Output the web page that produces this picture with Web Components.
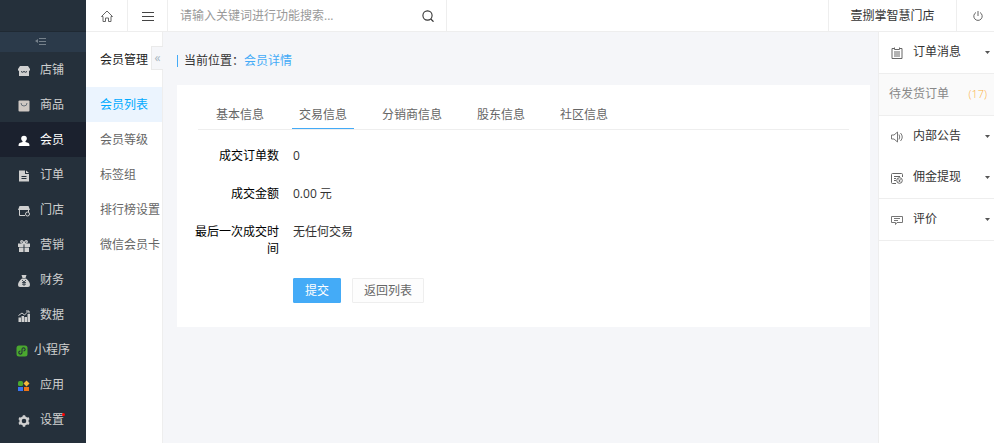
<!DOCTYPE html>
<html lang="zh-CN">
<head>
<meta charset="utf-8">
<title>会员详情</title>
<style>
  body {
    margin: 0;
    background: #f5f6f9;
    color: #333;
    font: 12px/17px "Open Sans", "Noto Sans CJK SC", sans-serif;
  }
</style>
</head>
<body>
<shop-layout>
  <side-nav slot="nav">
    <side-item icon="shop">店铺</side-item>
    <side-item icon="goods">商品</side-item>
    <side-item icon="member" active>会员</side-item>
    <side-item icon="order">订单</side-item>
    <side-item icon="store">门店</side-item>
    <side-item icon="gift">营销</side-item>
    <side-item icon="money">财务</side-item>
    <side-item icon="data">数据</side-item>
    <side-item icon="mini" wide>小程序</side-item>
    <side-item icon="apps">应用</side-item>
    <side-item icon="gear" dot>设置</side-item>
  </side-nav>
  <top-bar slot="top">壹捌掌智慧门店</top-bar>
  <sub-nav slot="sub" heading="会员管理">
    <sub-item active>会员列表</sub-item>
    <sub-item>会员等级</sub-item>
    <sub-item>标签组</sub-item>
    <sub-item>排行榜设置</sub-item>
    <sub-item>微信会员卡</sub-item>
  </sub-nav>
  <page-crumb label="当前位置：">会员详情</page-crumb>
  <info-card>
    <tab-list slot="tabs">
      <tab-item>基本信息</tab-item>
      <tab-item active>交易信息</tab-item>
      <tab-item>分销商信息</tab-item>
      <tab-item>股东信息</tab-item>
      <tab-item>社区信息</tab-item>
    </tab-list>
    <form-row label="成交订单数">0</form-row>
    <form-row label="成交金额">0.00 元</form-row>
    <form-row label="最后一次成交时间">无任何交易</form-row>
    <form-row><push-button primary>提交</push-button><push-button>返回列表</push-button></form-row>
  </info-card>
  <notice-panel slot="notices">
    <notice-group icon="clipboard" heading="订单消息" line>
      <notice-item count="(17)">待发货订单</notice-item>
    </notice-group>
    <notice-group icon="speaker" heading="内部公告"></notice-group>
    <notice-group icon="cash" heading="佣金提现" line></notice-group>
    <notice-group icon="comment" heading="评价" line></notice-group>
  </notice-panel>
</shop-layout>

<script>
const icons = {
  shop: '<path fill="#d0d0d0" d="M2 1h8l2 3v1q-1 2-2.500 1q-1.500 1.500-3.500 0q-2 1.500-3.500 0Q1 7 0 5V4z"/><path fill="#d0d0d0" d="M1 6h10v5H1z"/><path fill="none" stroke="#25303b" d="M3 6.500q1.500 1.500 3 0q1.500 1.500 3 0"/>',
  goods: '<rect x=".5" y=".5" width="11" height="11" rx="1" fill="#cfc8c3"/><path fill="none" stroke="#68717a" d="M3 3q0 3 3 3t3-3"/>',
  member: '<circle cx="6" cy="3.500" r="2.800" fill="#fff"/><path fill="#fff" d="M4.500 5h3v2l3 1q1 .5 1 3H.5q0-2.500 1-3l3-1z"/>',
  order: '<path fill="#d0d0d0" d="M1 .5h6V4h4v7.500H1z"/><path fill="#d0d0d0" d="M8 .5L11 3H8z"/><path stroke="#25303b" d="M3.500 6.500h5M3.500 8.500h5"/>',
  store: '<path fill="#d0d0d0" d="M1.500 1h9L12 5H0z"/><path fill="none" stroke="#d0d0d0" d="M1.500 5v5.500H7M10.500 5v2"/><circle cx="9.500" cy="9" r="2" fill="#25303b" stroke="#d0d0d0"/>',
  gift: '<path fill="#d0d0d0" d="M0 3.500h5.500V7H0zM6.500 3.500H12V7H6.500zM1 7.500h4.500V12H1zM6.500 7.500H11V12H6.500z"/><path fill="none" stroke="#d0d0d0" stroke-width="1.300" d="M6 3.500Q2 3 3 1q2-1 3 2.500Q7 0 9 1q1 2-3 2.500"/>',
  money: '<path fill="#d0d0d0" d="M3.500 0h5L7.500 3h-3zM4 3.500h4q4 3 4 6.500 0 2-2 2H2q-2 0-2-2 0-3.500 4-6.500z"/><path fill="none" stroke="#25303b" stroke-width=".8" d="M4 5l2 2 2-2M6 7v4M4 7.500h4M4 9.200h4"/>',
  data: '<path fill="#d0d0d0" d="M.5 7.500H3V12H.5zM3.500 6H6v6H3.500zM6.500 7H9v5H6.500zM9.500 4H12v8H9.500z"/><path fill="none" stroke="#d0d0d0" d="M.5 5.500L4 3l2.500 2L10 1.500M8 1h3v2.500"/>',
  mini: '<rect x=".5" y=".5" width="11" height="11" rx="2.500" fill="#4aa82f"/><path fill="none" stroke="#25303b" stroke-width="1.100" d="M4.500 6Q2.500 6.200 2.800 8q.6 1.500 2.200 1Q6 8.500 6 7.500v-3Q6 3 7.300 2.800q1.700 0 1.900 1.700Q9 6 7.500 6"/>',
  apps: '<rect x="0" y="1" width="5" height="5" rx="1.500" fill="#4aa82f"/><path fill="#f5b93b" d="M8.500.500L11.500 3.500 8.500 6.500 5.500 3.500z"/><rect y="7" width="5" height="4" fill="#3974f0"/><rect x="6" y="7" width="5" height="4" fill="#ee7416"/>',
  gear: '<circle cx="6" cy="6" r="3.500" fill="none" stroke="#d0d0d0" stroke-width="2.400"/><path fill="none" stroke="#d0d0d0" stroke-width="2.400" d="M6 .3v2M6 9.700v2M1 3.100l1.700 1M9.300 7.900l1.700 1M1 8.900l1.700-1M9.300 4.100l1.700-1"/>',
  fold: '<path fill="#76818b" d="M0 6l3-2v4z"/><path stroke="#76818b" d="M4 3.500h7M4 6.500h7M4 9.500h7"/>',
  home: '<path fill="none" stroke="#666" d="M.5 6.500L6 1l5.500 5.500H10v5H7.500V8h-3v3.500H2v-5z"/>',
  menu: '<path stroke="#444" d="M0 2.500h12M0 6.500h12M0 10.500h12"/>',
  search: '<circle cx="5.500" cy="5.500" r="4.600" fill="none" stroke="#333" stroke-width="1.100"/><path stroke="#333" stroke-width="1.200" d="M8.800 9l2.700 2.700"/>',
  power: '<path fill="none" stroke="#666" d="M4 2.500a4.200 4.200 0 1 0 4 0M6 1v5"/>',
  clipboard: '<path fill="none" stroke="#666" d="M3 1.500H1v10h10v-10H9M3.500 .5v2h5v-2M3 5h6M3 7h6M3 9h6"/>',
  speaker: '<path fill="none" stroke="#777" d="M.5 4H3l3.500-3v10L3 8H.5zM8 3.500q1.500 2.500 0 5M9.500 2q3.500 4 0 8"/>',
  cash: '<path fill="none" stroke="#666" d="M11.500 5V2.500q0-1-1-1h-9q-1 0-1 1v8q0 1 1 1H5M3 4.500h6M3 6.500h2M3 8.500h2"/><circle cx="8.500" cy="8.500" r="2.800" fill="none" stroke="#666"/><path fill="none" stroke="#666" stroke-width=".8" d="M7.300 7l1.200 1.200L9.700 7M8.500 8v2M7.500 9h2"/>',
  comment: '<path fill="none" stroke="#777" d="M.5 2.500h11v6H6l-1.500 2v-2h-4zM3 4.500h6M3 6.500h4"/>',
  caret: '<path fill="#555" d="M4 5h5L6.500 8z"/>'
};

function define(name, markup, setup) {
  const template = document.createElement("template");
  template.innerHTML = markup;
  customElements.define(name, class extends HTMLElement {
    constructor() {
      super();
      this.attachShadow({ mode: "open" }).append(template.content.cloneNode(true));
    }
    connectedCallback() {
      if (setup) setup(this, this.shadowRoot);
    }
  });
}

define("shop-layout", `
  <style>
    :host {
      display: grid;
      grid-template: auto 1fr / 86px 77px minmax(0, 1fr) 116px;
      min-height: 100vh;
    }
    .nav { grid-row: 1 / 3; display: grid; }
    .top { grid-column: 2 / 5; }
    .sub, .notices { display: grid; }
    main { padding: 20px 8px 20px 14px; }
  </style>
  <div class="nav"><slot name="nav"></slot></div>
  <div class="top"><slot name="top"></slot></div>
  <div class="sub"><slot name="sub"></slot></div>
  <main><slot></slot></main>
  <div class="notices"><slot name="notices"></slot></div>
`);

define("side-nav", `
  <style>
    :host { display: block; background: #25303b; }
    .brand { height: 31px; border-bottom: 1px solid #1f2933; }
    button {
      display: flex;
      align-items: center;
      justify-content: center;
      width: 100%;
      height: 20px;
      padding: 0 4px 3px 0;
      border: 0;
      background: #2b3a4a;
    }
  </style>
  <div class="brand"></div>
  <button aria-label="收起菜单"><ui-icon name="fold"></ui-icon></button>
  <nav><slot></slot></nav>
`);

define("side-item", `
  <style>
    :host { display: block; }
    a {
      display: flex;
      align-items: center;
      gap: 10px;
      height: 35px;
      padding-left: 18px;
      color: #d0d0d0;
      text-decoration: none;
    }
    :host([active]) a { background: #1b212e; color: #fff; }
    :host([wide]) a { gap: 6px; padding-left: 16px; }
    ui-icon { padding-top: 2px; }
    .text { position: relative; }
    :host([dot]) .text::after {
      content: "";
      position: absolute;
      top: 2px;
      right: -1px;
      width: 3px;
      height: 3px;
      border-radius: 50%;
      background: #f00;
    }
  </style>
  <a href="#"><ui-icon></ui-icon><span class="text"><slot></slot></span></a>
`, (el, root) => {
  root.querySelector("ui-icon").setAttribute("name", el.getAttribute("icon"));
});

define("top-bar", `
  <style>
    :host {
      display: flex;
      height: 31px;
      border-bottom: 1px solid #eee;
      background: #fff;
    }
    button {
      display: flex;
      align-items: center;
      justify-content: center;
      box-sizing: border-box;
      width: 40px;
      padding: 0;
      border: 0;
      background: none;
      color: #333;
      font: inherit;
    }
    .cell { border-right: 1px solid #eee; }
    .home { width: 42px; }
    form { display: flex; width: 278px; border-right: 1px solid #eee; }
    input {
      flex: 1;
      min-width: 0;
      padding: 0 0 0 12px;
      border: 0;
      outline: 0;
      background: none;
      font: inherit;
    }
    input::placeholder { color: #999; }
    form button { width: 36px; }
    .shop { width: 129px; margin-left: auto; border: 1px solid #eee; border-width: 0 1px; }
    .power { width: 37px; padding-left: 4px; }
  </style>
  <button class="cell home" aria-label="首页"><ui-icon name="home"></ui-icon></button>
  <button class="cell" aria-label="菜单"><ui-icon name="menu"></ui-icon></button>
  <form>
    <input type="text" aria-label="搜索" placeholder="请输入关键词进行功能搜索...">
    <button type="button" aria-label="搜索"><ui-icon name="search"></ui-icon></button>
  </form>
  <button class="shop"><slot></slot></button>
  <button class="power" aria-label="退出"><ui-icon name="power"></ui-icon></button>
`);

define("sub-nav", `
  <style>
    :host {
      display: block;
      position: relative;
      border-right: 1px solid #eee;
      background: #fff;
    }
    h2 {
      margin: 0;
      padding: 19px 0 19px 14px;
      color: #222;
      font: inherit;
    }
    /* handle sits over the panel's right edge */
    button {
      position: absolute;
      top: 14px;
      right: -1px;
      width: 12px;
      height: 24px;
      padding: 0 0 2px;
      border: 1px solid #eaeaea;
      border-right: 0;
      background: #f5f6f9;
      color: #a5b5c0;
      font: inherit;
    }
  </style>
  <h2></h2>
  <button aria-label="收起">«</button>
  <nav><slot></slot></nav>
`, (el, root) => {
  root.querySelector("h2").textContent = el.getAttribute("heading");
});

define("sub-item", `
  <style>
    :host { display: block; }
    a {
      display: block;
      padding: 9px 0 9px 14px;
      color: #666;
      text-decoration: none;
      white-space: nowrap;
    }
    :host([active]) a { background: #ebf4fe; color: #00aaff; }
  </style>
  <a href="#"><slot></slot></a>
`);

define("page-crumb", `
  <style>
    :host {
      display: flex;
      align-items: center;
      gap: 6px;
      margin-bottom: 16px;
    }
    :host::before {
      content: "";
      width: 1px;
      height: 12px;
      background: #44abf7;
    }
    p { margin: 0; }
    a { color: #44abf7; text-decoration: none; }
  </style>
  <p><span></span><a href="#"><slot></slot></a></p>
`, (el, root) => {
  root.querySelector("span").textContent = el.getAttribute("label");
});

define("info-card", `
  <style>
    :host { display: block; padding: 19px 21px 24px; background: #fff; }
    .rows { display: grid; gap: 21px; padding-top: 17px; margin-left: -5px; }
  </style>
  <slot name="tabs"></slot>
  <div class="rows"><slot></slot></div>
`);

define("tab-list", `
  <style>
    :host {
      display: flex;
      gap: 21px;
      padding: 0 11px;
      border-bottom: 1px solid #eee;
    }
  </style>
  <slot></slot>
`);

define("tab-item", `
  <style>
    :host { display: block; }
    a {
      display: block;
      padding: 2px 7px 5px;
      border-bottom: 1px solid transparent;
      color: #666;
      text-decoration: none;
    }
    :host([active]) a { border-color: #44abf7; }
  </style>
  <a href="#"><slot></slot></a>
`);

define("form-row", `
  <style>
    :host { display: grid; grid-template-columns: 86px 1fr; gap: 14px; }
    .label { color: #000; text-align: right; }
    .value { display: flex; gap: 11px; }
  </style>
  <div class="label"></div>
  <div class="value"><slot></slot></div>
`, (el, root) => {
  root.querySelector(".label").textContent = el.getAttribute("label");
});

define("push-button", `
  <style>
    :host { display: block; }
    button {
      height: 25px;
      padding: 0 11px;
      border: 1px solid #eee;
      border-radius: 1px;
      background: #fdfdfd;
      color: #666;
      font: inherit;
    }
    :host([primary]) button { border-color: #44abf7; background: #44abf7; color: #fff; }
  </style>
  <button><slot></slot></button>
`);

define("notice-panel", `
  <style>
    :host { display: block; border-left: 1px solid #eee; background: #fff; }
  </style>
  <slot></slot>
`);

define("notice-group", `
  <style>
    :host { display: block; }
    button {
      display: flex;
      align-items: center;
      gap: 10px;
      width: 100%;
      padding: 11px 1px 13px 12px;
      border: 0;
      background: none;
      color: #333;
      font: inherit;
    }
    :host([line]) button { border-bottom: 1px solid #eee; }
    .icon { padding-top: 2px; }
    .caret { margin-left: auto; }
  </style>
  <button><ui-icon class="icon"></ui-icon><span></span><ui-icon class="caret" name="caret"></ui-icon></button>
  <slot></slot>
`, (el, root) => {
  root.querySelector(".icon").setAttribute("name", el.getAttribute("icon"));
  root.querySelector("span").textContent = el.getAttribute("heading");
});

define("notice-item", `
  <style>
    :host { display: block; border-bottom: 1px solid #eee; background: #fafafa; }
    a {
      display: flex;
      justify-content: space-between;
      padding: 11px 7px 13px 10px;
      color: #888;
      text-decoration: none;
    }
    .count { color: #fbb03b; font-size: 11px; font-weight: 300; }
  </style>
  <a href="#"><slot></slot><span class="count"></span></a>
`, (el, root) => {
  root.querySelector(".count").textContent = el.getAttribute("count");
});

// comes last: the elements above name their icons first
define("ui-icon", `
  <style>
    :host { display: inline-flex; flex: none; width: 12px; height: 12px; }
    svg { flex: none; width: 12px; height: 12px; }
  </style>
  <svg viewBox="0 0 12 12" aria-hidden="true"></svg>
`, (el, root) => {
  root.querySelector("svg").innerHTML = icons[el.getAttribute("name")];
});
</script>
</body>
</html>
